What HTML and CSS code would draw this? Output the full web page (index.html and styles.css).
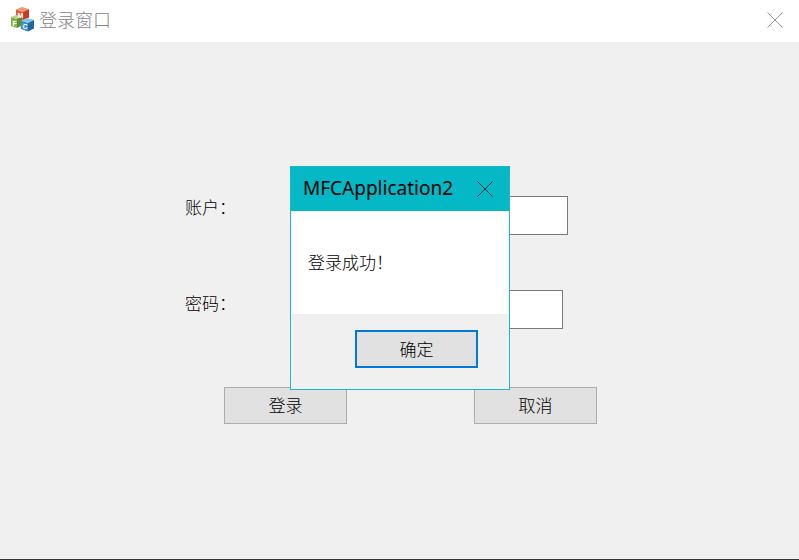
FILE: index.html
```html
<!DOCTYPE html>
<html lang="zh">
<head>
    <meta charset="UTF-8">
    <title>登录窗口</title>
    <link rel="stylesheet" href="styles.css">
</head>
<body>
    <div class="window">
        <!-- 标题栏 -->
        <div class="titlebar">
            <svg class="app-icon" width="25" height="26" viewBox="0 0 25 26">
                <path d="M6 3.5 L12 1 L19 3 L13 6 Z" fill="#ee9a70"/>
                <path d="M6 3.5 L13 6 L13 14.5 L6 12 Z" fill="#e2583a"/>
                <path d="M13 6 L19 3 L19 11.5 L13 14.5 Z" fill="#c23d24"/>
                <path d="M1 11 L6 9 L12 10.5 L7 13 Z" fill="#bdd47f"/>
                <path d="M1 11 L7 13 L7 22 L1 20 Z" fill="#86b347"/>
                <path d="M7 13 L12 10.5 L12 19.5 L7 22 Z" fill="#5f8d30"/>
                <path d="M11 14.5 L17 12 L24 14 L18 17 Z" fill="#8cc4e6"/>
                <path d="M11 14.5 L18 17 L18 25.5 L11 23 Z" fill="#3a8fcb"/>
                <path d="M18 17 L24 14 L24 22.5 L18 25.5 Z" fill="#1f679f"/>
                <text x="7.5" y="12" class="cube-letter">M</text>
                <text x="2.5" y="19.5" class="cube-letter">F</text>
                <text x="12.5" y="23" class="cube-letter">C</text>
            </svg>
            <span class="title-text">登录窗口</span>
            <svg class="close-icon" width="16" height="16" viewBox="0 0 16 16">
                <path d="M0.5 0.5 L15.5 15.5 M15.5 0.5 L0.5 15.5" stroke="#999" stroke-width="1" fill="none"/>
            </svg>
        </div>

        <!-- 登录表单 -->
        <div class="content">
            <div class="form-row">
                <label class="field-label">账户：</label>
                <input class="field-input account" type="text">
            </div>
            <div class="form-row second">
                <label class="field-label">密码：</label>
                <input class="field-input password" type="password">
            </div>
            <div class="actions">
                <button class="btn">登录</button>
                <button class="btn">取消</button>
            </div>
        </div>
    </div>

    <!-- 消息框 -->
    <div class="dialog">
        <div class="dialog-title">
            <span>MFCApplication2</span>
            <svg width="16" height="16" viewBox="0 0 16 16">
                <path d="M0.5 0.5 L15.5 15.5 M15.5 0.5 L0.5 15.5" stroke="#06343a" stroke-width="1" fill="none"/>
            </svg>
        </div>
        <div class="dialog-body">登录成功！</div>
        <div class="dialog-footer">
            <button class="btn ok">确定</button>
        </div>
    </div>
</body>
</html>
```

FILE: styles.css
```css
html, body {
    margin: 0;
    padding: 0;
}

body {
    width: 799px;
    height: 560px;
    overflow: hidden;
    position: relative;
    font-family: "Noto Sans CJK SC", sans-serif;
    font-size: 17px;
    font-weight: 300;
    color: #000;
    background-color: #f0f0f0;
}

.window {
    height: 560px;
    box-sizing: border-box;
    display: flex;
    flex-direction: column;
    border-bottom: 1px solid #333;
}

.titlebar {
    height: 42px;
    box-sizing: border-box;
    flex: none;
    display: flex;
    align-items: center;
    padding: 0 16px 5px 10px;
    background-color: #fff;
}

.app-icon {
    margin-right: 4px;
}

.cube-letter {
    font-family: "Liberation Sans", sans-serif;
    font-size: 7px;
    font-weight: bold;
    fill: #fff;
}

.title-text {
    font-size: 18px;
    color: #858585;
}

.close-icon {
    margin-left: auto;
    margin-top: 3px;
}

.content {
    flex: 1;
    padding: 154px 0 0 185px;
}

.form-row {
    display: flex;
    height: 39px;
}

.form-row.second {
    margin-top: 55px;
}

.field-label {
    width: 125px;
    line-height: 22px;
}

.second .field-label {
    margin-top: 2px;
}

.field-input {
    box-sizing: border-box;
    height: 39px;
    border: 1px solid #7a7a7a;
    padding: 0 4px;
    background-color: #fff;
}

.account {
    width: 258px;
}

.password {
    width: 253px;
}

.actions {
    display: flex;
    gap: 127px;
    margin: 58px 0 0 39px;
}

.btn {
    box-sizing: border-box;
    width: 123px;
    height: 37px;
    padding: 0 0 2px;
    border: 1px solid #adadad;
    background-color: #e1e1e1;
    font-family: inherit;
    font-size: 17px;
    font-weight: inherit;
    color: #000;
}

.dialog {
    position: absolute;
    left: 290px;
    top: 166px;
    width: 220px;
    height: 224px;
    box-sizing: border-box;
    display: flex;
    flex-direction: column;
    border: 1px solid #1fb6c8;
    background-color: #f0f0f0;
}

.dialog-title {
    height: 44px;
    box-sizing: border-box;
    flex: none;
    display: flex;
    align-items: center;
    justify-content: space-between;
    padding: 0 16px 2px 12px;
    background-color: #04b8c6;
    font-family: "Noto Sans", sans-serif;
    font-size: 19px;
    font-weight: 400;
}

.dialog-title svg {
    margin-top: 2px;
}

.dialog-body {
    height: 103px;
    flex: none;
    box-sizing: border-box;
    padding: 40px 0 0 17px;
    line-height: 22px;
    background-color: #fff;
}

.dialog-footer {
    flex: 1;
    display: flex;
    justify-content: flex-end;
    align-items: flex-start;
    padding: 16px 31px 0 0;
}

.btn.ok {
    height: 38px;
    border: 2px solid #0078d7;
}
```
